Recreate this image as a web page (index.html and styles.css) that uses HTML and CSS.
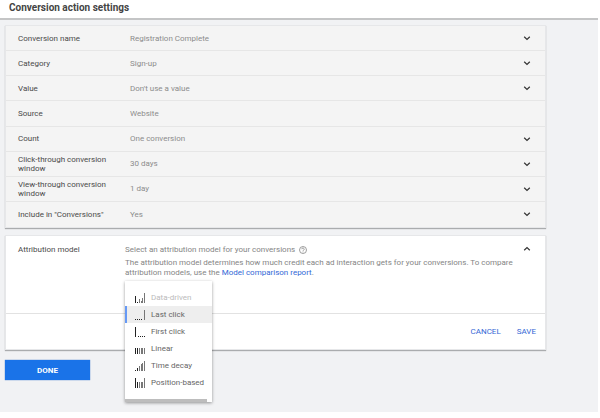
FILE: index.html
```html
<!DOCTYPE html>
<html lang="en">
<head>
  <meta charset="UTF-8">
  <meta name="viewport" content="width=device-width, initial-scale=1.0">
  <title>Conversion action settings</title>
  <link rel="stylesheet" href="styles.css">
</head>
<body>
  <svg class="sprite" aria-hidden="true">
    <symbol id="chevron" viewBox="0 0 8 8">
      <path d="M1.2 2.7 4 5.4 6.8 2.7" fill="none" stroke="currentColor" stroke-width="1.2"/>
    </symbol>
  </svg>
  <header class="page-header">
    <h1>Conversion action settings</h1>
  </header>
  <main>
    <section class="panel settings">
      <div class="row">
        <span class="label">Conversion name</span>
        <span class="value">Registration Complete</span>
        <button class="toggle" type="button" aria-label="Edit conversion name"><svg><use href="#chevron"/></svg></button>
      </div>
      <div class="row">
        <span class="label">Category</span>
        <span class="value">Sign-up</span>
        <button class="toggle" type="button" aria-label="Edit category"><svg><use href="#chevron"/></svg></button>
      </div>
      <div class="row">
        <span class="label">Value</span>
        <span class="value">Don't use a value</span>
        <button class="toggle" type="button" aria-label="Edit value"><svg><use href="#chevron"/></svg></button>
      </div>
      <div class="row">
        <span class="label">Source</span>
        <span class="value">Website</span>
      </div>
      <div class="row">
        <span class="label">Count</span>
        <span class="value">One conversion</span>
        <button class="toggle" type="button" aria-label="Edit count"><svg><use href="#chevron"/></svg></button>
      </div>
      <div class="row">
        <span class="label">Click-through conversion window</span>
        <span class="value">30 days</span>
        <button class="toggle" type="button" aria-label="Edit click-through window"><svg><use href="#chevron"/></svg></button>
      </div>
      <div class="row">
        <span class="label">View-through conversion window</span>
        <span class="value">1 day</span>
        <button class="toggle" type="button" aria-label="Edit view-through window"><svg><use href="#chevron"/></svg></button>
      </div>
      <div class="row">
        <span class="label">Include in "Conversions"</span>
        <span class="value">Yes</span>
        <button class="toggle" type="button" aria-label="Edit include in conversions"><svg><use href="#chevron"/></svg></button>
      </div>
    </section>

    <section class="panel attribution">
      <div class="attribution-body">
        <span class="label">Attribution model</span>
        <div class="details">
          <p class="prompt">Select an attribution model for your conversions
            <button class="help" type="button" aria-label="Help">
              <svg viewBox="0 0 8 8" fill="none" stroke="currentColor">
                <circle cx="4" cy="4" r="3.5" stroke-width=".8"/>
                <path d="M2.8 3.2a1.2 1.1 0 1 1 1.9.9C4.200 4.400 4 4.600 4 5.100M4 5.600v.7" stroke-width=".8"/>
              </svg>
            </button>
          </p>
          <p class="text">The attribution model determines how much credit each ad interaction gets for your conversions. To compare attribution models, use the <a href="#">Model comparison report</a>.</p>
          <div class="menu" role="listbox" aria-label="Attribution model">
            <button class="option" type="button" role="option" disabled>
              <svg viewBox="0 0 10 10"><path class="dark" d="M0 3h1v7H0zM2 9h1v1H2z"/><path d="M4 6h1v4H4zM6 8h1v2H6zM7 5h1v5H7zM9 0h1v10H9z"/></svg>
              Data-driven
            </button>
            <button class="option selected" type="button" role="option" aria-selected="true">
              <svg viewBox="0 0 10 10"><path class="dark" d="M0 9h1v1H0zM2 9h1v1H2zM4 9h1v1H4zM6 9h1v1H6z"/><path d="M9 0h1v10H9z"/></svg>
              Last click
            </button>
            <button class="option" type="button" role="option">
              <svg viewBox="0 0 10 10"><path class="dark" d="M0 0h1v10H0zM3 9h1v1H3zM5 9h1v1H5zM7 9h1v1H7zM9 9h1v1H9z"/></svg>
              First click
            </button>
            <button class="option" type="button" role="option">
              <svg viewBox="0 0 10 10"><path class="dark" d="M0 4h1v6H0zM2 4h1v6H2z"/><path d="M4 4h1v6H4zM6 4h1v6H6zM7 4h1v6H7zM9 4h1v6H9z"/></svg>
              Linear
            </button>
            <button class="option" type="button" role="option">
              <svg viewBox="0 0 10 10"><path class="dark" d="M0 9h1v1H0zM2 7h1v3H2z"/><path d="M4 5h1v5H4zM6 3h1v7H6zM7 2h1v8H7zM9 0h1v10H9z"/></svg>
              Time decay
            </button>
            <button class="option" type="button" role="option">
              <svg viewBox="0 0 10 10"><path class="dark" d="M0 0h1v10H0zM2 4h1v6H2z"/><path d="M4 4h1v6H4zM6 4h1v6H6zM7 4h1v6H7zM9 0h1v10H9z"/></svg>
              Position-based
            </button>
            <div class="scrollbar"></div>
          </div>
        </div>
        <button class="toggle open" type="button" aria-label="Collapse attribution model"><svg><use href="#chevron"/></svg></button>
      </div>
      <div class="actions">
        <button type="button">CANCEL</button>
        <button type="button">SAVE</button>
      </div>
    </section>

    <button class="done" type="button">DONE</button>
  </main>
</body>
</html>
```

FILE: styles.css
```css
* {
  box-sizing: border-box;
}
body {
  margin: 0;
  background: #fff;
  color: #4a4a4a;
  font-family: Roboto, sans-serif;
  font-size: 8px;
  line-height: 9px;
}
button {
  padding: 0;
  border: none;
  background: none;
  color: inherit;
  font: inherit;
  cursor: pointer;
}
.sprite {
  display: none;
}
.page-header {
  height: 20px;
  margin-right: 2px;
  padding: 1px 9px;
  border-bottom: 2px solid #c4c5c6;
}
h1 {
  margin: 0;
  color: #444;
  font-size: 10px;
  font-weight: 700;
  line-height: 13px;
}
main {
  margin-right: 2px;
  padding: 5px 52px 32px 5px;
  background: #f1f2f4;
}
.panel {
  border: 1px solid #e6e7e9;
  box-shadow: 0 1px 1px #aaacae;
}
.settings {
  display: grid;
  grid-auto-rows: 1fr;
  min-height: 203px;
  background: #f4f4f4;
}
.row {
  display: flex;
  align-items: center;
  padding: 0 14px 0 12px;
  border-bottom: 1px solid #e6e6e6;
}
.row:last-child {
  border-bottom: none;
}
.label {
  width: 92px;
  margin-right: 20px;
}
.value {
  flex: 1;
  color: #8c8c8c;
}
.toggle {
  display: flex;
  color: #333;
}
.toggle svg {
  width: 8px;
  height: 8px;
}
.toggle.open svg {
  transform: rotate(180deg);
}
.attribution {
  margin-top: 7px;
  background: #fff;
}
.attribution-body {
  display: flex;
  align-items: flex-start;
  min-height: 77px;
  padding: 9px 14px 0 12px;
}
.attribution-body .label {
  margin-right: 15px;
}
.details {
  position: relative;
  flex: 1;
  color: #858585;
}
.details p {
  margin: 0;
}
.prompt {
  display: flex;
  align-items: center;
  gap: 4px;
}
.details .text {
  margin: 4px 10px 0 0;
  line-height: 10px;
}
.help {
  display: flex;
}
.help svg {
  width: 8px;
  height: 8px;
}
a {
  color: #3367d6;
  text-decoration: none;
}
.menu {
  position: absolute;
  top: 36px;
  left: 0;
  width: 87px;
  padding-top: 8px;
  background: #fff;
  box-shadow: 0 1px 3px rgba(0, 0, 0, 0.4);
}
.option {
  display: flex;
  align-items: center;
  gap: 6px;
  width: 100%;
  height: 17px;
  padding-left: 10px;
  color: #666;
}
.option svg {
  width: 10px;
  height: 10px;
  fill: #777;
}
.option .dark {
  fill: #222;
}
.option:disabled {
  color: #bbb;
}
.option.selected {
  padding-left: 8px;
  border-left: 2px solid #6699f5;
  background: #eee;
}
.scrollbar {
  width: 82px;
  height: 3px;
  margin-top: 8px;
  background: #bdbdbd;
}
.actions {
  display: flex;
  align-items: center;
  justify-content: flex-end;
  gap: 16px;
  height: 36px;
  padding-right: 9px;
  border-top: 1px solid #e2e2e2;
  color: #3367d6;
}
.done {
  display: block;
  width: 85px;
  height: 20px;
  margin-top: 10px;
  background: #1a73e8;
  box-shadow: 0 0 1px #1a5fc0;
  color: #fff;
  font-weight: 700;
}
```
